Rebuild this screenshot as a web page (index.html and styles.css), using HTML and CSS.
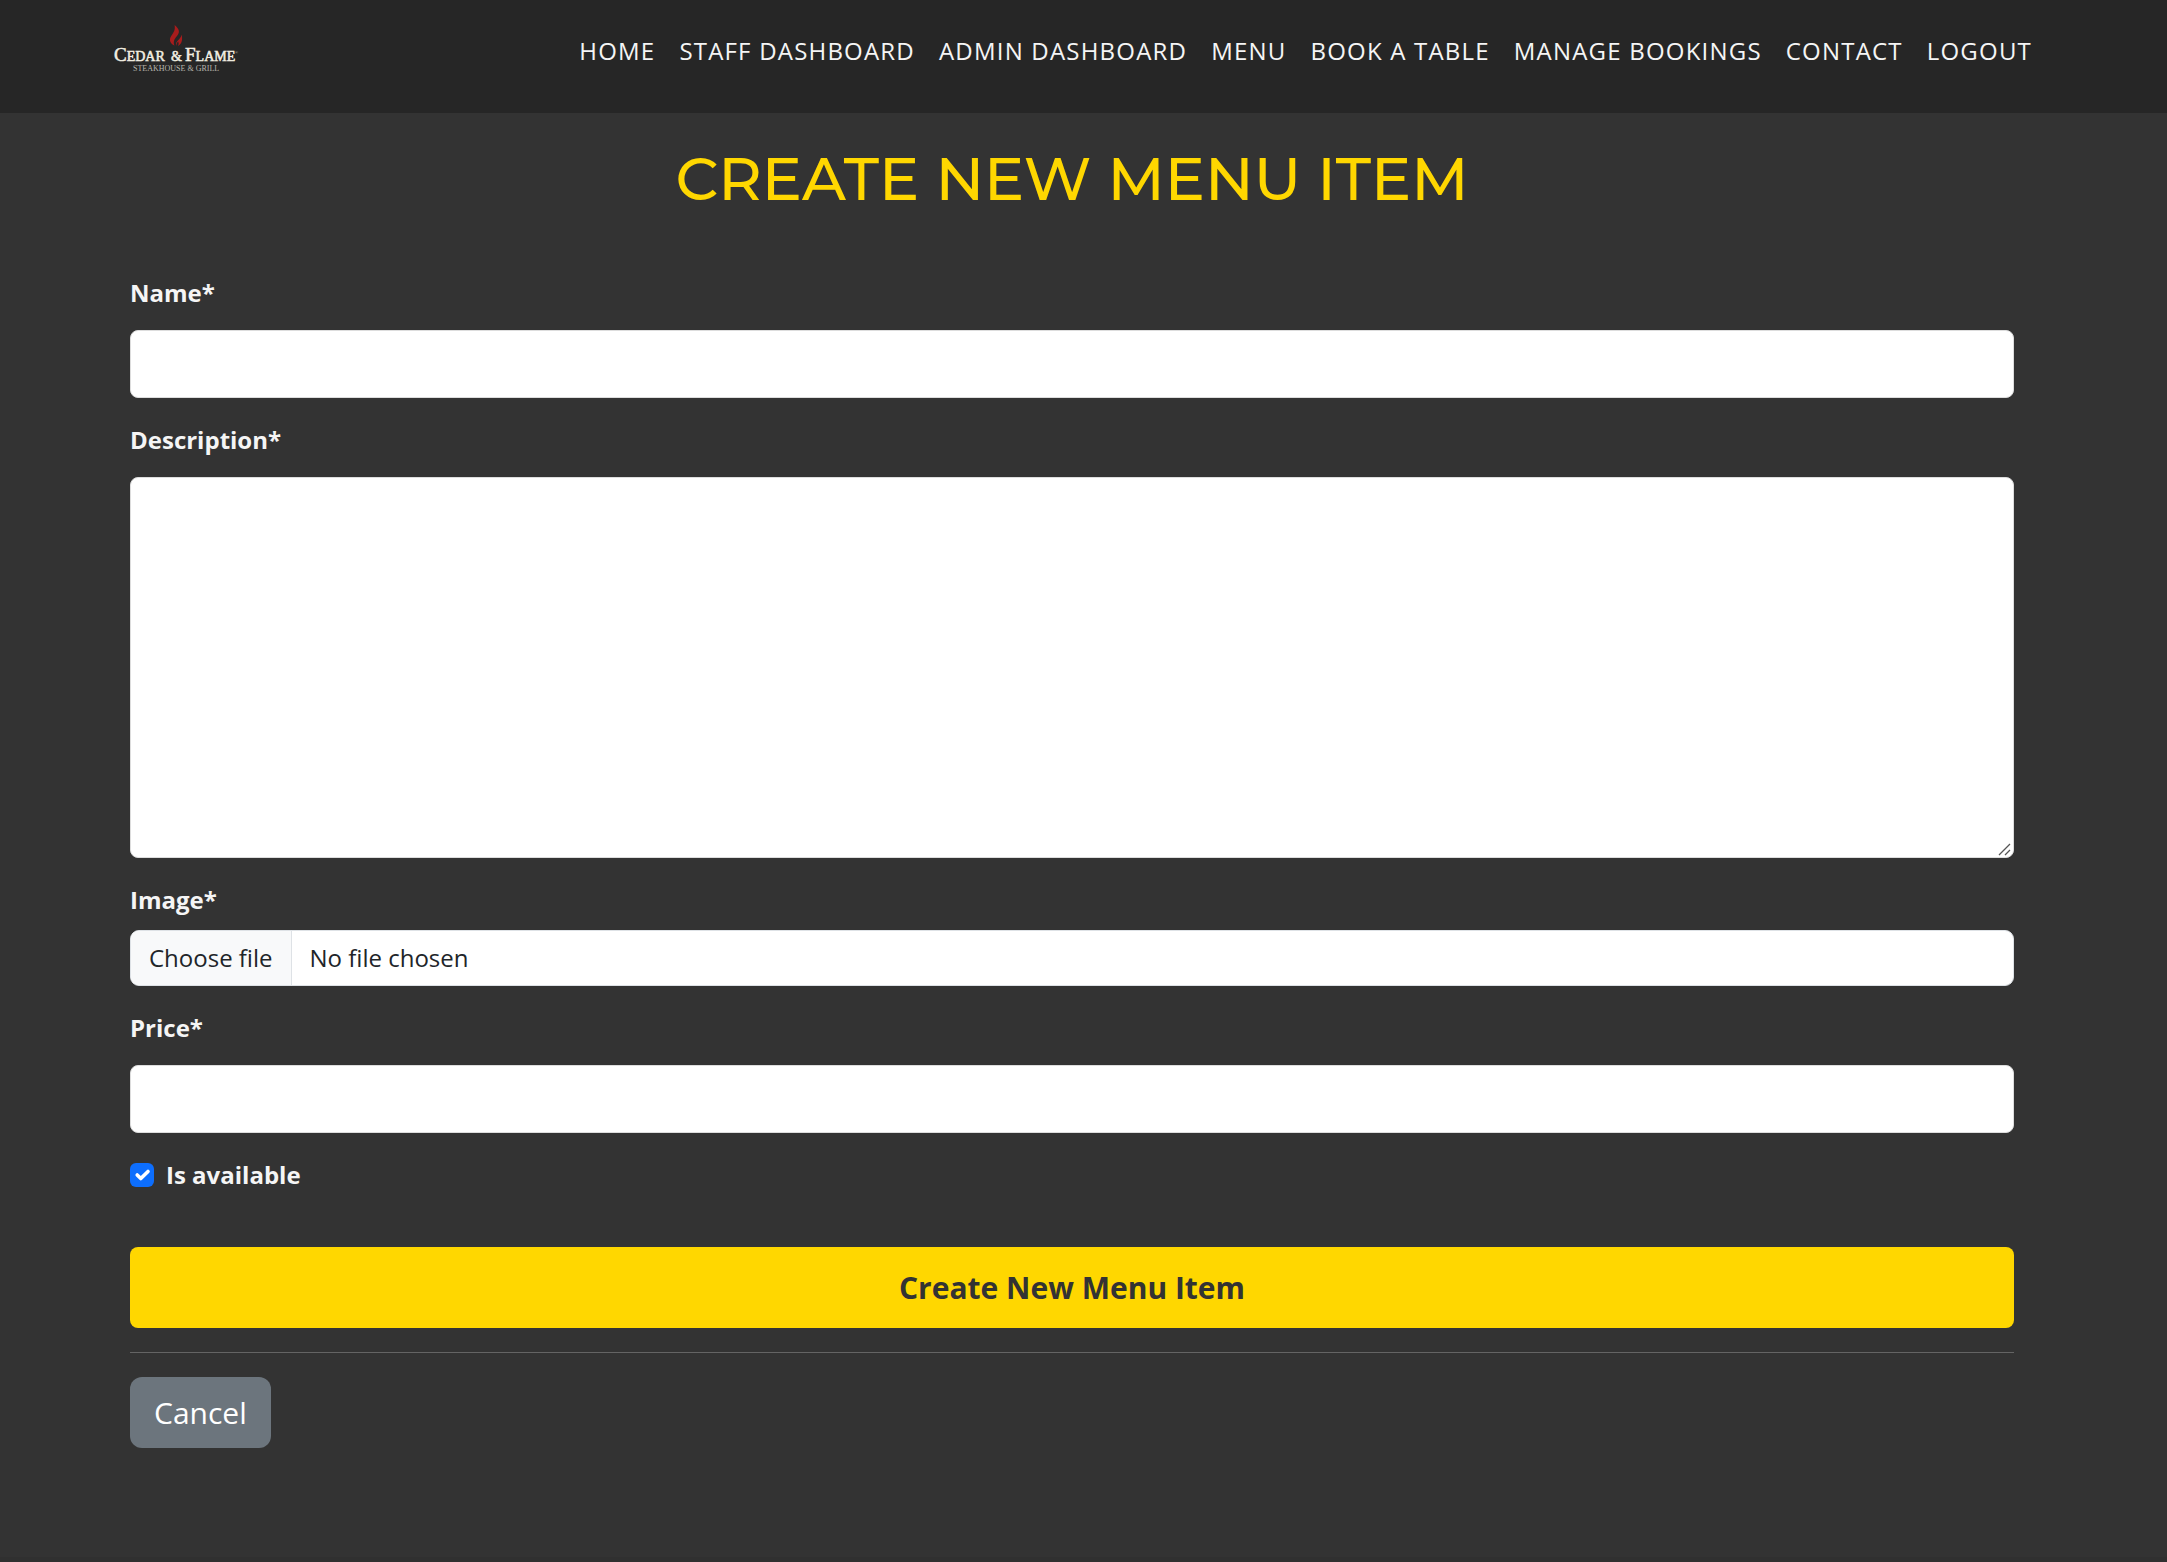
FILE: index.html
```html
<!DOCTYPE html>
<html lang="en">
<head>
<meta charset="utf-8">
<meta name="viewport" content="width=device-width, initial-scale=1">
<title>Create New Menu Item</title>
<link rel="stylesheet" href="styles.css">
</head>
<body>
<header class="site-header">
  <a class="brand" href="#" aria-label="Cedar &amp; Flame">
    <svg class="brand-logo" viewBox="0 0 130 50" aria-hidden="true">
      <path class="flame" d="M61.500 0C66 3.500 67.500 7 64 11C61 14.500 60 17 61.500 20.500C57 18.500 55.500 14.500 58.500 10.500C61 7 62.500 4.500 61.500 0ZM68.700 9.500C69.500 14 69.500 18.500 65 21C66 19 65.600 17.800 65.200 16.500C63.800 17.800 63.300 19 63.500 21C61 16.500 68 14.500 68.700 9.500Z"/>
      <g class="brand-name">
        <text x="1" y="36"><tspan class="cap">C</tspan>EDAR</text>
        <text x="58" y="36">&amp;</text>
        <text x="72" y="36"><tspan class="cap">F</tspan>LAME</text>
      </g>
      <text class="brand-mark" x="122" y="29">®</text>
      <text class="brand-sub" x="20" y="46">STEAKHOUSE &amp; GRILL</text>
    </svg>
  </a>
  <nav class="nav">
    <a href="#">HOME</a>
    <a href="#">STAFF DASHBOARD</a>
    <a href="#">ADMIN DASHBOARD</a>
    <a href="#">MENU</a>
    <a href="#">BOOK A TABLE</a>
    <a href="#">MANAGE BOOKINGS</a>
    <a href="#">CONTACT</a>
    <a href="#">LOGOUT</a>
  </nav>
</header>
<main class="content">
  <h1 class="title">CREATE NEW MENU ITEM</h1>
  <form class="form">
    <div class="field">
      <label for="name">Name*</label>
      <input class="text-input" id="name" type="text">
    </div>
    <div class="field">
      <label for="description">Description*</label>
      <textarea class="text-input" id="description" rows="10"></textarea>
    </div>
    <div class="field field-file">
      <label for="image">Image*</label>
      <div class="file-control">
        <span class="file-button">Choose file</span>
        <span class="file-name">No file chosen</span>
        <input class="file-input" id="image" type="file">
      </div>
    </div>
    <div class="field">
      <label for="price">Price*</label>
      <input class="text-input" id="price" type="text">
    </div>
    <div class="check-row">
      <input class="check" id="available" type="checkbox" checked>
      <label for="available">Is available</label>
    </div>
    <button class="submit" type="submit">Create New Menu Item</button>
  </form>
  <hr class="rule">
  <a class="cancel" href="#">Cancel</a>
</main>
<footer class="site-footer"></footer>
</body>
</html>
```
FILE: styles.css
```css
* { box-sizing: border-box; }

body {
  margin: 0;
  min-height: 100vh;
  display: flex;
  flex-direction: column;
  background: #333333;
  color: #f5f5f5;
  font: 24px/36px "Open Sans", "Noto Sans", sans-serif;
}

.site-header {
  display: flex;
  align-items: flex-start;
  justify-content: space-between;
  min-height: 113px;
  padding: 25px 135px 0 113px;
  background: #262626;
}

.brand { display: block; }
.brand-logo { display: block; width: 130px; height: 50px; }
.flame { fill: #a81c1c; }
.brand-name {
  fill: #f3efe2;
  stroke: #f3efe2;
  stroke-width: 0.5;
  font: 14px "Liberation Serif", serif;
}
.brand-name .cap { font-size: 19px; }
.brand-mark {
  fill: #b9b6ae;
  font: 4px "Liberation Serif", serif;
}
.brand-sub {
  fill: #b9b6ae;
  font: 8px "Liberation Serif", serif;
}

.nav {
  display: flex;
  gap: 24px;
  padding-top: 8px;
}
.nav a {
  color: #f5f5f5;
  text-decoration: none;
  letter-spacing: 0.05em;
  white-space: nowrap;
}

.content {
  flex: 1;
  padding: 24px 153px 72px 130px;
}

.title {
  margin: 0 0 54px;
  color: #ffd700;
  font: 500 60px/84px Montserrat, Inter, sans-serif;
  text-align: center;
}

.field { margin-bottom: 24px; }
label { display: block; font-weight: 700; }
.field label { margin-bottom: 19px; }
.field-file label { margin-bottom: 12px; }

.text-input {
  display: block;
  width: 100%;
  height: 68px;
  padding: 16px 18px;
  border: 1px solid #dddddd;
  border-radius: 8px;
  background: #ffffff;
  color: #212529;
  font: inherit;
}
textarea.text-input { height: 381px; resize: vertical; }
textarea.text-input::-webkit-resizer {
  background: url("data:image/svg+xml,%3Csvg xmlns='http://www.w3.org/2000/svg' width='15' height='15' viewBox='0 0 15 15'%3E%3Cpath fill='none' stroke='%23555' stroke-width='1.3' d='M1 13 12 2M7 13l5-5'/%3E%3C/svg%3E") right bottom no-repeat;
}

.file-control {
  position: relative;
  display: flex;
  height: 56px;
  overflow: hidden;
  border: 1px solid #dee2e6;
  border-radius: 9px;
  background: #ffffff;
  color: #212529;
}
.file-button {
  padding: 9px 18px;
  border-right: 1px solid #dee2e6;
  background: #f8f9fa;
}
.file-name { padding: 9px 18px; }
.file-input {
  position: absolute;
  inset: 0;
  width: 100%;
  opacity: 0;
  cursor: pointer;
}

.check-row {
  display: flex;
  align-items: center;
  gap: 12px;
  margin-bottom: 54px;
}
.check {
  appearance: none;
  width: 24px;
  height: 24px;
  margin: 0;
  border-radius: 6px;
  background: #0d6efd url("data:image/svg+xml,%3Csvg xmlns='http://www.w3.org/2000/svg' viewBox='0 0 20 20'%3E%3Cpath fill='none' stroke='%23fff' stroke-linecap='round' stroke-linejoin='round' stroke-width='3' d='m6 10 3 3 6-6'/%3E%3C/svg%3E") center / contain no-repeat;
}

.submit {
  display: block;
  width: 100%;
  height: 81px;
  border: 0;
  border-radius: 8px;
  background: #ffd700;
  color: #333333;
  font: 700 30px/44px "Open Sans", "Noto Sans", sans-serif;
}

.rule {
  margin: 24px 0;
  border: 0;
  border-top: 1px solid #646464;
}

.cancel {
  display: inline-block;
  padding: 13px 24px;
  border-radius: 12px;
  background: #6c757d;
  color: #ffffff;
  font-size: 30px;
  line-height: 45px;
  text-decoration: none;
}

.site-footer { height: 5px; background: #303030; }
```
